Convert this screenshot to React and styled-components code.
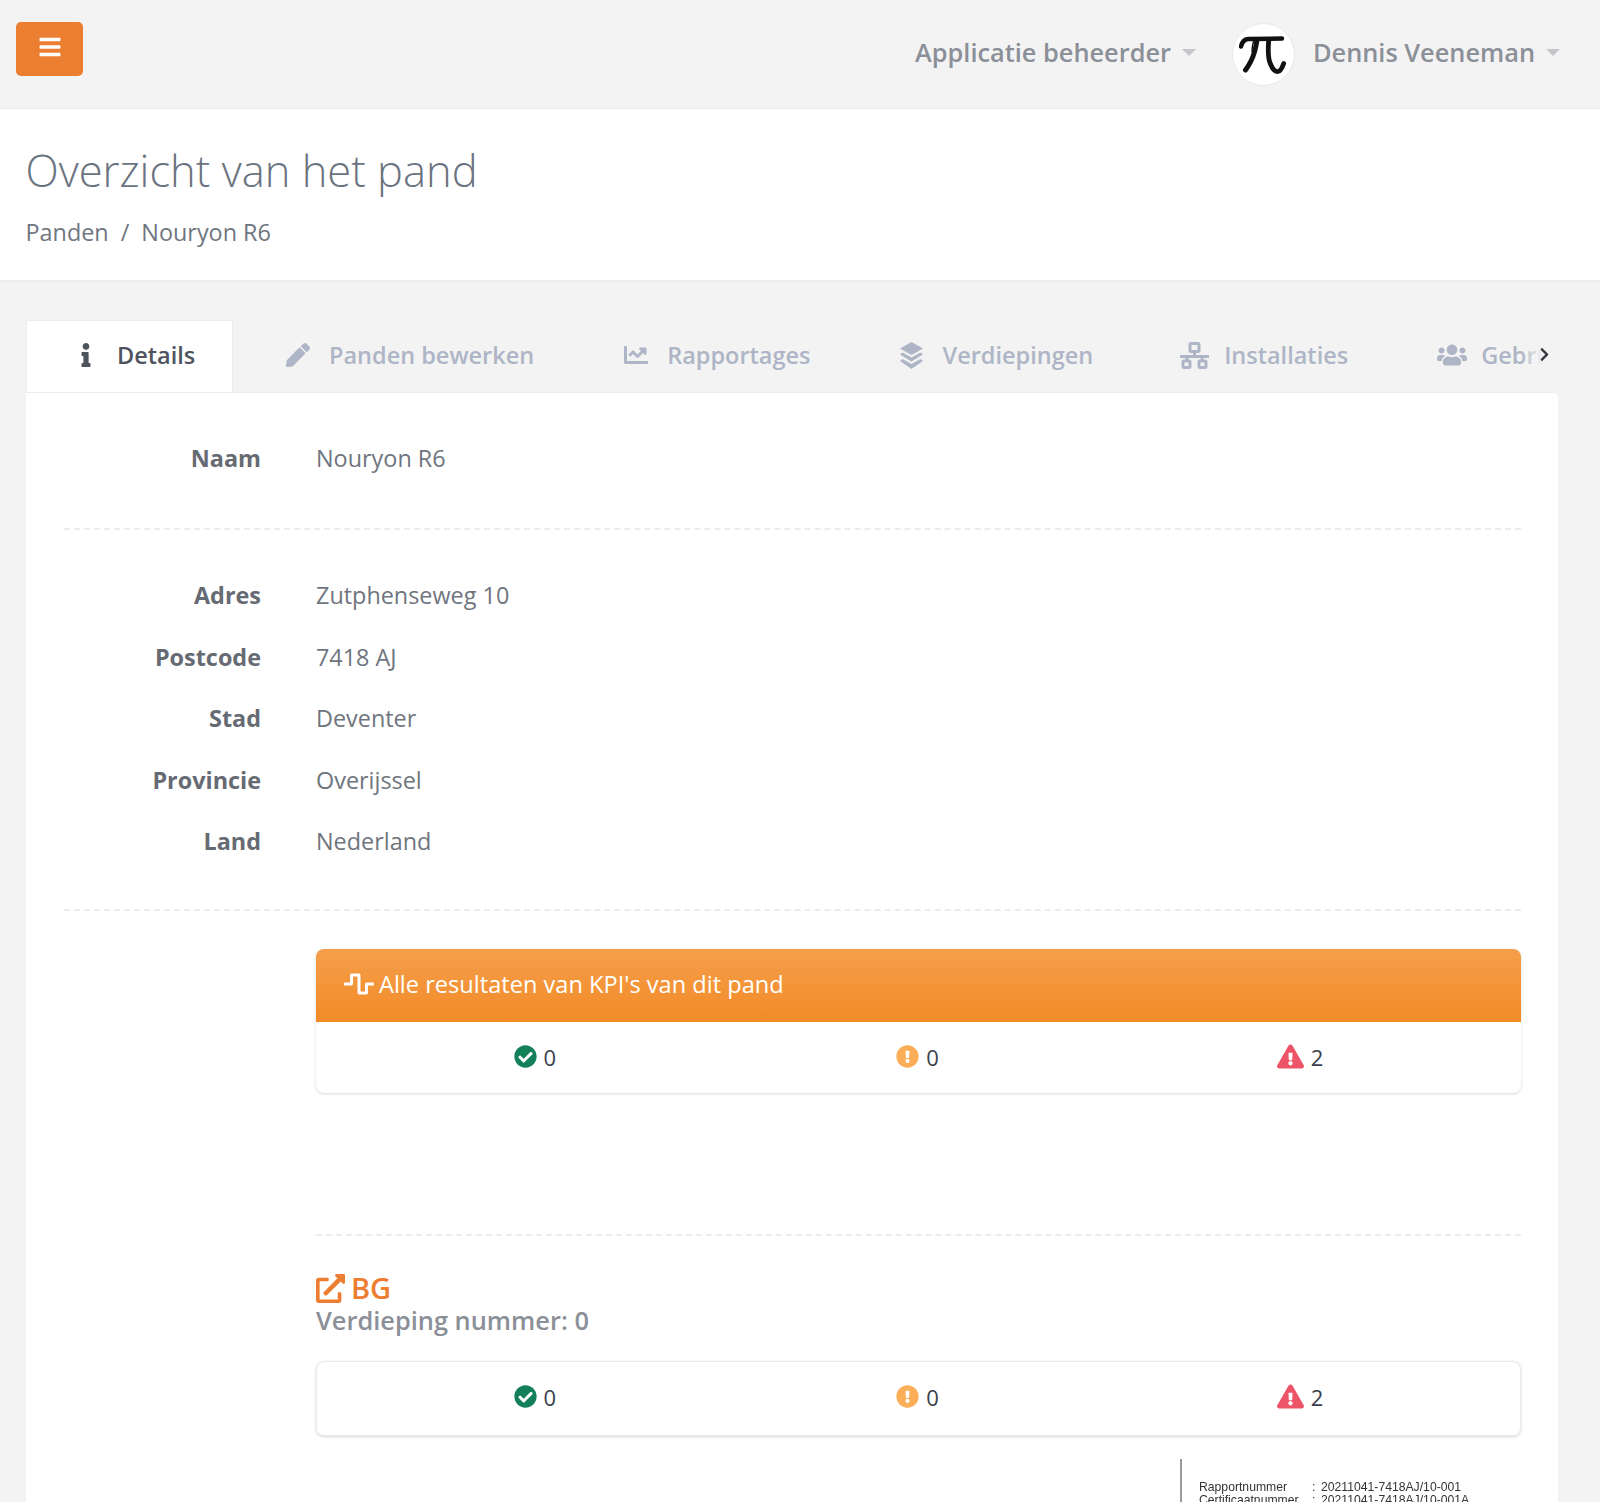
import React from 'react';
import styled, { createGlobalStyle } from 'styled-components';
import { FaBars, FaInfo, FaPen, FaChartLine, FaUsers, FaChevronRight, FaCheckCircle, FaExclamationCircle, FaExclamationTriangle, FaExternalLinkAlt, FaWaveSquare } from 'react-icons/fa';

const Global = createGlobalStyle`
  html, body { margin: 0; padding: 0; background: #f3f3f3; }
  body { height: 1502px; overflow: hidden; font-family: "Open Sans", "Liberation Sans", sans-serif; }
  * { box-sizing: border-box; }
`;

const Page = styled.div`height: 1502px; overflow: hidden; display: flex; flex-direction: column;`;

const TopBar = styled.header`
  height: 109px; flex: none; display: flex; align-items: flex-start; justify-content: space-between;
  padding: 22px 40px 0 16px; border-bottom: 1px solid #e8e9ec; background: #f3f3f3;
`;
const MenuButton = styled.button`
  width: 67px; height: 54px; border: 0; border-radius: 5px; background: #ec7e31; color: #fff;
  display: flex; align-items: center; justify-content: center; padding: 0 0 4px; font-size: 24px;
`;
const UserArea = styled.div`display: flex; align-items: center; height: 63px; margin-top: 1px;`;
const UserLink = styled.span`
  font-size: 25.35px; font-weight: 600; color: #8b8f98; display: flex; align-items: center;
  margin-right: ${p => p.$gap || 0}px; margin-bottom: 6px;
`;
const Caret = styled.i`
  display: inline-block; margin-left: 11px; margin-top: 2px; border-top: 7px solid #c3c5ca;
  border-left: 7px solid transparent; border-right: 7px solid transparent;
`;
const Avatar = styled.span`
  width: 63px; height: 63px; border-radius: 50%; background: #fff; border: 1px solid #e6e8ec; margin-right: 18px;
  display: flex; align-items: center; justify-content: center;
`;

const PageHead = styled.section`
  height: 173px; flex: none; background: #fff; border-bottom: 2px solid #ebedf1; padding: 32px 25.5px 0;
`;
const Title = styled.h1`
  margin: 0; font-weight: 300; font-size: 43.5px; line-height: 60px; color: #6b7380;
`;
const Crumbs = styled.div`
  margin-top: 15px; font-size: 23.4px; line-height: 32px; color: #6f7680; display: flex; gap: 12px;
`;

const Content = styled.main`padding: 38px 41px 0 26px; flex: 1;`;
const Tabs = styled.nav`
  position: relative; display: flex; height: 73px; width: 1527px; overflow: hidden; align-items: stretch;
  border-bottom: 1px solid #ebedf1;
`;
const Tab = styled.div`
  flex: none; display: flex; align-items: center; padding: 0 44.5px 2px ${p => p.$left || 44.5}px;
  font-size: 23.5px; font-weight: 600; white-space: nowrap;
  color: ${p => p.$active ? '#4e545e' : '#aeb5c6'};
  background: ${p => p.$active ? '#fff' : 'transparent'};
  ${p => p.$active ? 'width: 207px; padding-bottom: 4px; border: 1px solid #ebedf1; border-bottom: 0;' : ''}
`;
const TabIcon = styled.span`
  width: ${p => p.$w}px; margin-right: ${p => p.$gap}px; display: flex; justify-content: center; align-items: center; font-size: 24px;
`;
const TabFade = styled.span`
  position: absolute; right: 0; top: 0; bottom: 0; width: 32px;
  background: linear-gradient(to right, rgba(243,243,243,0), #f3f3f3 70%);
`;
const TabArrow = styled.span`
  position: absolute; right: 1px; top: 27px; color: #34373e; font-size: 15px; line-height: 1;
`;

const Card = styled.div`
  background: #fff; padding: 34px 37px 0 38px; border-radius: 0 4px 0 0; height: 1200px; width: 1532px;
`;
const Row = styled.div`
  display: grid; grid-template-columns: 197px 1fr; column-gap: 55px; height: 61.5px; align-items: center;
  font-size: 23.4px; line-height: 30px;
`;
const Label = styled.span`text-align: right; font-weight: 700; color: #666a72;`;
const Value = styled.span`color: #6f757e;`;
const Dashed = styled.hr`
  border: 0; border-top: 2px dashed #ececef; margin: ${p => p.$my || 0};
`;
const Side = styled.div`margin-left: 252px;`;

const Panel = styled.div`
  border-radius: 8px; background: #fff; overflow: hidden;
  box-shadow: 0 1px 3px rgba(60,70,90,.22)${p => p.$outlined ? ', inset 0 0 0 1px #e9ebef' : ''};
`;
const PanelHead = styled.div`
  height: 73px; padding: 0 0 3px 28px; display: flex; align-items: center; gap: 5px; color: #fff;
  font-size: 23.6px; background: linear-gradient(to bottom, #f59e4b, #f28b27);
`;
const Stats = styled.div`
  display: grid; grid-template-columns: repeat(3, 1fr); padding: 0 29.5px ${p => p.$pb}px 27.5px; height: ${p => p.$h}px; align-items: center;
`;
const Stat = styled.div`
  display: flex; align-items: center; justify-content: center; gap: 7px; font-size: 22px; color: #3a404c;
`;
const FloorTitle = styled.div`
  margin-top: 35px; display: flex; align-items: center; gap: 6px; color: #ed7e31; font-size: 29px; font-weight: 600; line-height: 34px;
`;
const FloorSub = styled.div`
  font-size: 25.4px; font-weight: 600; color: #8b8f98; line-height: 30px; margin-bottom: 26px;
`;
const Report = styled.div`
  margin-top: 23px; margin-left: 864px; border-left: 2px solid #9a9a9a; padding: 22px 0 0 17px; height: 60px;
  font-family: "Liberation Sans", sans-serif; font-size: 12.2px; line-height: 13px; color: #333; filter: blur(.4px);
`;
const ReportRow = styled.div`display: grid; grid-template-columns: 113px 9px auto; white-space: nowrap;`;

const PiLogo = () => (
  <svg width="48" height="48" viewBox="0 0 48 48" fill="none" stroke="#111" strokeLinecap="round" strokeLinejoin="round">
    <path d="M2 15.5C3 11 5 8.5 9 8L43 7.5" strokeWidth="4.5" />
    <path d="M18 9C17 16 15 24 12 30C10 34 8 37 6.5 39" strokeWidth="5" />
    <path d="M29.7 9C29 18 28.5 27 31.5 33C33.5 38 36 41 39 40.5C41.5 40 43.5 36 44.7 32.5" strokeWidth="4.8" />
    <path d="M14.5 10.5C13.5 14 13 17 13 20.5" strokeWidth="1.4" />
  </svg>
);

const LayersIcon = () => (
  <svg width="25" height="27" viewBox="0 0 25 27" fill="currentColor">
    <path d="M12.5 0L24 6.5 12.5 13 1 6.5z" />
    <path d="M3.5 10.5L12.5 15.5 21.5 10.5 24 12.5 12.5 19.5 1 12.5z" />
    <path d="M3.5 17L12.5 22 21.5 17 24 19 12.5 27 1 19z" />
  </svg>
);

const NetworkIcon = () => (
  <svg width="29" height="27" viewBox="0 0 29 27" fill="none" stroke="currentColor" strokeWidth="3">
    <rect x="10" y="1.5" width="9" height="8" rx="1" />
    <path d="M14.5 9.5V16" />
    <path d="M0 14.5H29" />
    <path d="M7 14.5V19M22 14.5V19" />
    <rect x="3" y="19" width="7" height="6.5" rx="1" />
    <rect x="19" y="19" width="7" height="6.5" rx="1" />
  </svg>
);

const tabs = [
  { label: 'Details', icon: <FaInfo />, w: 30, gap: 19, left: 47, active: true },
  { label: 'Panden bewerken', icon: <FaPen size={24} />, w: 25, gap: 19, left: 52 },
  { label: 'Rapportages', icon: <FaChartLine />, w: 25, gap: 19 },
  { label: 'Verdiepingen', icon: <LayersIcon />, w: 25, gap: 18 },
  { label: 'Installaties', icon: <NetworkIcon />, w: 29, gap: 15, left: 42.5 },
  { label: 'Gebruikers', icon: <FaUsers size={30} />, w: 30, gap: 14 },
];

const StatRow = ({ h, pb = 0 }) => (
  <Stats $h={h} $pb={pb}>
    <Stat><FaCheckCircle size={23} color="#14805a" />0</Stat>
    <Stat><FaExclamationCircle size={23} color="#fbae57" />0</Stat>
    <Stat><FaExclamationTriangle size={27} color="#ee5468" />2</Stat>
  </Stats>
);

export default function App() {
  return (
    <Page>
      <Global />
      <TopBar>
        <MenuButton aria-label="menu"><FaBars /></MenuButton>
        <UserArea>
          <UserLink $gap={36}>Applicatie beheerder<Caret /></UserLink>
          <Avatar><PiLogo /></Avatar>
          <UserLink>Dennis Veeneman<Caret /></UserLink>
        </UserArea>
      </TopBar>
      <PageHead>
        <Title>Overzicht van het pand</Title>
        <Crumbs><span>Panden</span><span>/</span><span>Nouryon R6</span></Crumbs>
      </PageHead>
      <Content>
        <Tabs>
          {tabs.map(t => (
            <Tab key={t.label} $active={t.active} $left={t.left}>
              <TabIcon $w={t.w} $gap={t.gap}>{t.icon}</TabIcon>{t.label}
            </Tab>
          ))}
          <TabFade />
          <TabArrow><FaChevronRight /></TabArrow>
        </Tabs>
        <Card>
          <Row><Label>Naam</Label><Value>Nouryon R6</Value></Row>
          <Dashed $my="39px 0 35px" />
          <Row><Label>Adres</Label><Value>Zutphenseweg 10</Value></Row>
          <Row><Label>Postcode</Label><Value>7418 AJ</Value></Row>
          <Row><Label>Stad</Label><Value>Deventer</Value></Row>
          <Row><Label>Provincie</Label><Value>Overijssel</Value></Row>
          <Row><Label>Land</Label><Value>Nederland</Value></Row>
          <Dashed $my="37px 0 38px" />
          <Side>
            <Panel>
              <PanelHead><FaWaveSquare size={30} />Alle resultaten van KPI's van dit pand</PanelHead>
              <StatRow h={71} pb={2} />
            </Panel>
            <Dashed $my="141px 0 0" />
            <FloorTitle><FaExternalLinkAlt size={29} />BG</FloorTitle>
            <FloorSub>Verdieping nummer: 0</FloorSub>
            <Panel $outlined><StatRow h={75} pb={4} /></Panel>
            <Report>
              <ReportRow><span>Rapportnummer</span><span>:</span><span>20211041-7418AJ/10-001</span></ReportRow>
              <ReportRow><span>Certificaatnummer</span><span>:</span><span>20211041-7418AJ/10-001A</span></ReportRow>
            </Report>
          </Side>
        </Card>
      </Content>
    </Page>
  );
}
